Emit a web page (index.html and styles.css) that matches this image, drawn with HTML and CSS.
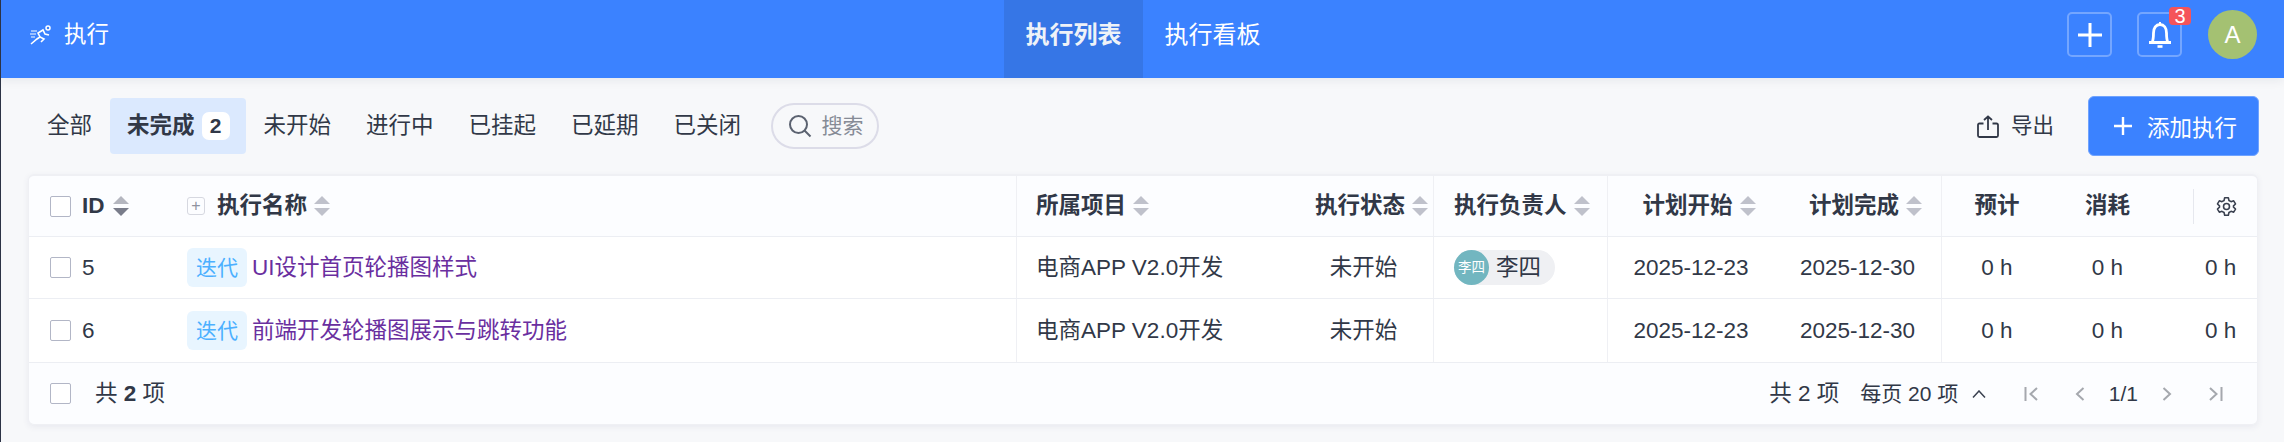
FILE: index.html
```html
<!DOCTYPE html>
<html lang="zh-CN">
<head>
  <meta charset="UTF-8">
  <title>执行</title>
  <link rel="stylesheet" href="styles.css">
</head>
<body>

  <svg class="defs" width="0" height="0">
    <symbol id="sort" viewBox="0 0 16 20">
      <path d="M8 0 16 8H0Z"/>
      <path d="M0 12H16L8 20Z"/>
    </symbol>
  </svg>

  <div class="app">

    <header class="topbar">
      <div class="topbar-left">
        <svg class="run-icon" viewBox="0 0 22 20" fill="none" stroke="#fff">
          <circle cx="18" cy="3" r="2" stroke-width="1.5"/>
          <path d="M1 19 7 14 10 12 8 8 13 5 15 9 19 10" stroke-width="1.6"/>
          <path d="M10 12 14 14 11 17" stroke-width="1.6"/>
          <path d="M1 6H7M0 9H6M1 12H5" stroke="#b9d3ff" stroke-width="1.4"/>
        </svg>
        <span>执行</span>
      </div>
      <nav class="topnav">
        <a class="topnav-item active">执行列表</a>
        <a class="topnav-item">执行看板</a>
      </nav>
      <div class="topbar-right">
        <button class="icon-box">
          <svg width="24" height="24" viewBox="0 0 24 24" stroke="#fff" stroke-width="3"><path d="M0 12H24M12 0V24"/></svg>
        </button>
        <button class="icon-box bell">
          <svg width="24" height="26" viewBox="0 0 24 26" fill="none" stroke="#fff" stroke-width="2.800">
            <path d="M1 20.500H23M4 20.500C5.500 18 5.500 15 5.500 11C5.500 6 8 2.500 12 2.500S18.500 6 18.500 11C18.500 15 18.500 18 20 20.500"/>
            <path d="M9.500 24.500H14.500" stroke-width="2.600"/>
            <path d="M12 0V2" stroke-width="2"/>
          </svg>
          <span class="badge">3</span>
        </button>
        <div class="avatar">A</div>
      </div>
    </header>

    <main class="main">

      <div class="toolbar">
        <div class="tabs">
          <a class="tab">全部</a>
          <a class="tab active">未完成<span class="count">2</span></a>
          <a class="tab">未开始</a>
          <a class="tab">进行中</a>
          <a class="tab">已挂起</a>
          <a class="tab">已延期</a>
          <a class="tab">已关闭</a>
        </div>
        <div class="search">
          <svg width="24" height="24" viewBox="0 0 24 24" fill="none" stroke="#5b6270" stroke-width="2"><circle cx="10.500" cy="10.500" r="8.500"/><path d="M16.500 16.500 22.500 22.500"/></svg>
          <span>搜索</span>
        </div>
        <div class="toolbar-right">
          <a class="export">
            <svg width="22" height="23" viewBox="0 0 22 23" fill="none" stroke="#313847" stroke-width="1.800"><path d="M6.500 8.500H2.500C1.500 8.500 1 9 1 10V20.500C1 21.500 1.500 22 2.500 22H19.500C20.500 22 21 21.500 21 20.500V10C21 9 20.500 8.500 19.500 8.500H15.500"/><path d="M11 15V1.500M7 5 11 1.500 15 5"/></svg>
            导出
          </a>
          <button class="add-button">
            <svg width="18" height="18" viewBox="0 0 18 18" stroke="#fff" stroke-width="2.400"><path d="M0 9H18M9 0V18"/></svg>
            添加执行
          </button>
        </div>
      </div>

      <section class="card">
        <div class="grid head">
          <div class="cell cell-id"><span class="checkbox"></span><span class="label">ID</span>
            <svg class="sort sort-down" viewBox="0 0 16 20"><path class="up" d="M8 0 16 8H0Z"/><path class="down" d="M0 12H16L8 20Z"/></svg>
          </div>
          <div class="cell cell-name"><span class="expand">+</span><span class="label">执行名称</span><svg class="sort"><use href="#sort"/></svg></div>
          <div class="cell cell-project sep"><span class="label">所属项目</span><svg class="sort"><use href="#sort"/></svg></div>
          <div class="cell center shift"><span class="label">执行状态</span><svg class="sort"><use href="#sort"/></svg></div>
          <div class="cell cell-owner sep"><span class="label">执行负责人</span><svg class="sort"><use href="#sort"/></svg></div>
          <div class="cell center shift sep"><span class="label">计划开始</span><svg class="sort"><use href="#sort"/></svg></div>
          <div class="cell center shift"><span class="label">计划完成</span><svg class="sort"><use href="#sort"/></svg></div>
          <div class="cell center sep"><span class="label">预计</span></div>
          <div class="cell center"><span class="label">消耗</span></div>
          <div class="cell cell-gear">
            <div class="gear-box">
              <svg width="21" height="21" viewBox="0 0 24 24" fill="none" stroke="#3a4150" stroke-width="1.800" stroke-linejoin="round"><path d="M9.900 2H14.100L14.800 5.100 17.200 6.500 20.200 5.500 22.300 9.100 20 11.200V12.800L22.300 14.900 20.200 18.500 17.200 17.500 14.800 18.900 14.100 22H9.900L9.200 18.900 6.800 17.500 3.800 18.500 1.700 14.900 4 12.800V11.200L1.700 9.100 3.800 5.500 6.800 6.500 9.200 5.100Z"/><circle cx="12" cy="12" r="3.400"/></svg>
            </div>
          </div>
        </div>

        <div class="grid row">
          <div class="cell cell-id"><span class="checkbox"></span>5</div>
          <div class="cell cell-name"><span class="tag">迭代</span><a class="title">UI设计首页轮播图样式</a></div>
          <div class="cell cell-project sep">电商APP V2.0开发</div>
          <div class="cell center">未开始</div>
          <div class="cell cell-owner sep">
            <span class="owner"><span class="owner-pic">李四</span><span class="owner-name">李四</span></span>
          </div>
          <div class="cell center sep">2025-12-23</div>
          <div class="cell center">2025-12-30</div>
          <div class="cell center sep">0 h</div>
          <div class="cell center">0 h</div>
          <div class="cell cell-left">0 h</div>
        </div>

        <div class="grid row">
          <div class="cell cell-id"><span class="checkbox"></span>6</div>
          <div class="cell cell-name"><span class="tag">迭代</span><a class="title">前端开发轮播图展示与跳转功能</a></div>
          <div class="cell cell-project sep">电商APP V2.0开发</div>
          <div class="cell center">未开始</div>
          <div class="cell cell-owner sep"></div>
          <div class="cell center sep">2025-12-23</div>
          <div class="cell center">2025-12-30</div>
          <div class="cell center sep">0 h</div>
          <div class="cell center">0 h</div>
          <div class="cell cell-left">0 h</div>
        </div>

        <div class="card-foot">
          <div class="foot-left"><span class="checkbox"></span><span>共 <b>2</b> 项</span></div>
          <div class="pager">
            <span class="pager-total">共 2 项</span>
            <span class="pager-size">每页 20 项</span>
            <svg class="chevron" width="14" height="8" viewBox="0 0 14 8" fill="none" stroke="#3a4150" stroke-width="1.500"><path d="M1 7.500 7 1 13 7.500"/></svg>
            <svg class="pg first" width="14" height="14" viewBox="0 0 14 14" fill="none" stroke="#a5a8ae" stroke-width="2"><path d="M1.500 0V14M13 1 6.500 7 13 13"/></svg>
            <svg class="pg prev" width="14" height="14" viewBox="0 0 14 14" fill="none" stroke="#a5a8ae" stroke-width="2"><path d="M10.500 1 4 7 10.500 13"/></svg>
            <span class="pager-page">1/1</span>
            <svg class="pg next" width="14" height="14" viewBox="0 0 14 14" fill="none" stroke="#a5a8ae" stroke-width="2"><path d="M3.500 1 10 7 3.500 13"/></svg>
            <svg class="pg last" width="14" height="14" viewBox="0 0 14 14" fill="none" stroke="#a5a8ae" stroke-width="2"><path d="M12.500 0V14M1 1 7.500 7 1 13"/></svg>
          </div>
        </div>
      </section>

    </main>
  </div>

</body>
</html>
```

FILE: styles.css
```css
* {
  box-sizing: border-box;
}

html,
body {
  height: 442px;
  overflow: hidden;
}

body {
  margin: 0;
  font-family: "Liberation Sans", "Noto Sans CJK SC", sans-serif;
  font-size: 22.5px;
  line-height: 30px;
  color: #313847;
  background-color: #f7f8fa;
}

.defs {
  position: absolute;
}

.app {
  height: 442px;
  overflow: hidden;
  border-left: 1px solid #2c3345;
}

/* top bar */
.topbar {
  display: grid;
  grid-template-columns: 1fr auto 1fr;
  height: 78px;
  padding: 0 27px 0 29px;
  margin-left: -1px;
  background-color: #3b82ff;
  color: white;
  box-shadow: 0 2px 10px rgba(30, 40, 70, 0.08);
}

.topbar-left {
  display: flex;
  align-items: center;
  height: 69px;
  gap: 12px;
  margin-left: 1px;
}

.run-icon {
  width: 22px;
  height: 20px;
}

.topnav {
  display: flex;
}

.topnav-item {
  display: block;
  width: 139px;
  height: 78px;
  padding-top: 20px;
  text-align: center;
  font-size: 24px;
  color: #fff;
}

.topnav-item.active {
  background-color: #3676e6;
  font-weight: bold;
  color: #eef2f8;
}

.topbar-right {
  display: flex;
  justify-content: flex-end;
  align-items: center;
  height: 69px;
  gap: 25px;
}

.icon-box {
  position: relative;
  display: flex;
  align-items: center;
  justify-content: center;
  width: 45px;
  height: 45px;
  padding: 0;
  background: none;
  border: 2px solid #74a6ff;
  border-radius: 5px;
}

.badge {
  position: absolute;
  top: -7px;
  right: -11px;
  width: 22px;
  height: 18px;
  background-color: #f5545a;
  border-radius: 4px;
  color: white;
  font-size: 20px;
  line-height: 18px;
  text-align: center;
}

.avatar {
  width: 49px;
  height: 49px;
  margin-left: 1px;
  border-radius: 50%;
  background-color: #a4c172;
  color: white;
  font-size: 24px;
  line-height: 49px;
  text-align: center;
}

/* main */
.main {
  padding: 18px 25px 0 27px;
}

.toolbar {
  display: flex;
  align-items: center;
  height: 60px;
  margin-bottom: 18px;
}

.tabs {
  display: flex;
  margin-left: 1.5px;
}

.tab {
  display: flex;
  align-items: center;
  height: 56px;
  padding: 0 17.5px;
  border-radius: 4px;
  white-space: nowrap;
}

.tab.active {
  background-color: #dbe9fe;
  font-weight: bold;
}

.count {
  width: 28px;
  height: 28px;
  margin-left: 7px;
  margin-right: -1px;
  background-color: white;
  border-radius: 7px;
  font-size: 21px;
  line-height: 28px;
  text-align: center;
}

.search {
  display: flex;
  align-items: center;
  gap: 10px;
  width: 108px;
  height: 46px;
  margin-left: 12px;
  padding-left: 15px;
  border: 2px solid #dcdce8;
  border-radius: 23px;
  font-size: 21px;
  color: #868b96;
}

.toolbar-right {
  display: flex;
  align-items: center;
  margin-left: auto;
}

.export {
  display: flex;
  align-items: center;
  gap: 12px;
  font-size: 21.5px;
}

.add-button {
  display: flex;
  align-items: center;
  gap: 15px;
  width: 171px;
  height: 60px;
  margin-left: 34px;
  padding: 0 0 0 25px;
  background-color: #3b82ff;
  border: 1px solid #6fa3ff;
  border-radius: 6px;
  color: white;
  font-family: inherit;
  font-size: 22.5px;
}

/* table */
.card {
  width: 2230px;
  background-color: #fcfdff;
  border: 1px solid #eff0f4;
  border-top-width: 2px;
  border-radius: 6px;
  box-shadow: 0 2px 6px rgba(60, 70, 110, 0.08);
}

.grid {
  display: grid;
  grid-template-columns: 138px 849px 278px 139px 174px 167px 167px 111px 111px 1fr;
  border-bottom: 1px solid #eceef3;
}

.head {
  height: 61px;
}

.row {
  height: 62px;
  background-color: white;
}

.row + .row {
  height: 64px;
}

.cell {
  display: flex;
  align-items: center;
  min-width: 0;
  white-space: nowrap;
}

.cell.sep {
  border-left: 1px solid #eff0f4;
}

.center {
  justify-content: center;
}

.shift {
  padding-left: 16px;
}

.label {
  font-weight: bold;
}

.cell-id {
  padding-left: 21px;
  gap: 11px;
}

.cell-id .sort {
  margin-left: -3px;
}

.cell-name {
  padding-left: 20px;
}

.cell-project {
  padding-left: 19px;
}

.cell-owner {
  padding-left: 20px;
}

.cell-left {
  padding-left: 42px;
}

.cell-gear {
  justify-content: flex-end;
}

.gear-box {
  display: flex;
  align-items: center;
  justify-content: center;
  width: 64px;
  height: 35px;
  padding-left: 2px;
  border-left: 1px solid #e6e8ee;
}

.checkbox {
  flex: none;
  display: block;
  width: 21px;
  height: 21px;
  background-color: white;
  border: 1px solid #b2b6c6;
  border-radius: 2px;
}

.sort {
  flex: none;
  width: 16px;
  height: 20px;
  margin-left: 7px;
  fill: #bfc1cb;
}

.sort-down .up {
  fill: #b4b6bf;
}

.sort-down .down {
  fill: #797c8a;
}

.expand {
  display: block;
  width: 18px;
  height: 18px;
  margin-right: 12px;
  border: 1px solid #d6d8e0;
  border-radius: 3px;
  color: #8f93a0;
  font-size: 16px;
  line-height: 15px;
  text-align: center;
}

.tag {
  display: block;
  width: 60px;
  height: 39px;
  background-color: #e8f5ff;
  border-radius: 6px;
  color: #4cb0ff;
  font-size: 21px;
  line-height: 39px;
  text-align: center;
}

.title {
  margin-left: 5px;
  color: #6a2f9f;
}

.owner {
  display: flex;
  align-items: center;
  width: 101px;
  height: 35px;
  background-color: #eff0f3;
  border-radius: 18px;
}

.owner-pic {
  width: 35px;
  height: 35px;
  border-radius: 50%;
  background-color: #72b6c0;
  color: white;
  font-size: 13.5px;
  line-height: 35px;
  text-align: center;
}

.owner-name {
  margin-left: 7px;
}

/* footer */
.card-foot {
  display: flex;
  justify-content: space-between;
  align-items: center;
  height: 61px;
  padding: 0 34px 0 21px;
}

.foot-left {
  display: flex;
  align-items: center;
  gap: 24px;
}

.pager {
  display: flex;
  align-items: center;
}

.pager-size {
  margin-left: 21px;
  font-size: 21px;
}

.pager-page {
  margin: 0 22px;
  font-size: 21px;
}

.chevron {
  margin-left: 14px;
}

.first {
  margin-left: 37.5px;
}

.prev {
  margin-left: 35px;
}

.last {
  margin-left: 35px;
}
```
